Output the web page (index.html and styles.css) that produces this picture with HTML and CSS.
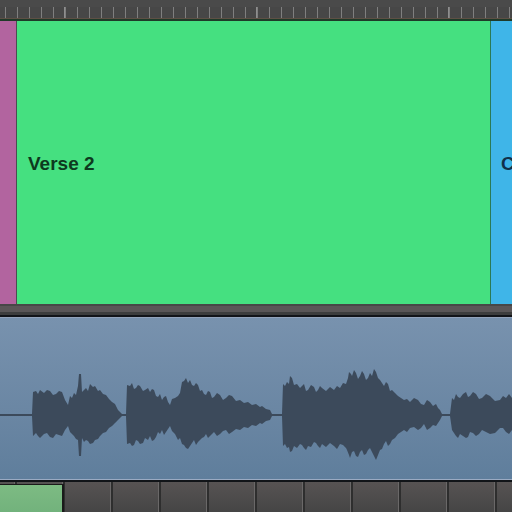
FILE: index.html
```html
<!DOCTYPE html>
<html lang="en">
<head>
  <meta charset="UTF-8">
  <meta name="viewport" content="width=device-width, initial-scale=1.0">
  <title>Arrangement</title>
  <link rel="stylesheet" href="styles.css">
</head>

<body>
  <div class="editor">
    <div class="ruler"></div>

    <div class="arrange-lane">
      <div class="section section-pink"></div>
      <div class="section section-green">
        <span class="section-name">Verse 2</span>
      </div>
      <div class="section section-blue">
        <span class="section-name">C</span>
      </div>
    </div>

    <div class="lane-divider"></div>

    <div class="audio-region">
      <svg class="waveform" width="512" height="162" viewBox="0 318 512 162">
        <path d="M0,414 L32,414 L33,392 L36,391 L38,394 L40,390 L44,393 L47,390 L50,391 L53,395 L56,394 L59,391 L62,392 L65,400 L68,405 L70,396 L72,398 L74,393 L76,395 L78,386 L79,374 L81,374 L82,392 L84,390 L86,388 L88,391 L90,384 L93,387 L95,386 L98,391 L100,390 L103,394 L106,395 L109,399 L112,402 L115,404 L118,410 L122,414 L126,414 L127,385 L130,386 L132,383 L134,389 L136,388 L138,385 L140,386 L143,391 L145,390 L148,388 L150,392 L152,389 L154,390 L156,396 L158,397 L160,394 L162,400 L164,397 L166,396 L168,402 L170,405 L172,399 L175,398 L178,396 L180,393 L182,382 L184,381 L186,378 L188,383 L190,380 L192,385 L194,386 L196,383 L198,385 L200,391 L202,390 L204,394 L206,395 L208,391 L210,392 L212,398 L214,397 L217,393 L220,395 L223,400 L226,398 L229,395 L232,396 L236,401 L240,400 L244,403 L248,402 L252,405 L256,404 L260,407 L262,406 L266,409 L270,410 L272,414 L282,414 L283,384 L285,386 L287,382 L289,384 L290,376 L292,378 L294,385 L297,384 L300,388 L302,386 L304,384 L306,391 L308,390 L311,385 L314,387 L316,392 L318,390 L320,386 L322,388 L326,391 L330,387 L334,390 L337,386 L340,388 L343,383 L346,384 L348,378 L349,372 L351,374 L352,376 L354,370 L356,373 L358,379 L360,376 L362,371 L364,374 L366,380 L368,378 L370,373 L372,376 L374,369 L376,372 L378,378 L380,380 L382,383 L384,386 L386,382 L388,384 L390,391 L392,390 L395,393 L398,396 L401,398 L404,400 L407,399 L410,402 L414,398 L418,400 L421,404 L424,405 L427,400 L430,402 L433,406 L436,404 L438,408 L440,410 L442,414 L450,414 L452,398 L454,400 L456,394 L458,397 L460,398 L463,394 L466,392 L468,397 L470,396 L473,392 L476,394 L479,399 L482,398 L486,394 L490,396 L495,401 L500,400 L503,396 L506,398 L509,394 L512,398 L512,430 L509,434 L506,432 L503,428 L500,428 L495,433 L490,434 L486,432 L482,430 L479,434 L476,436 L473,433 L470,432 L468,437 L466,438 L463,436 L460,434 L458,438 L456,436 L454,433 L452,430 L450,416 L442,416 L440,420 L438,423 L436,426 L433,425 L430,428 L427,430 L424,424 L421,428 L418,430 L414,427 L410,428 L407,432 L404,430 L401,432 L398,434 L395,438 L392,440 L390,444 L388,446 L386,441 L384,444 L382,449 L380,450 L378,455 L376,460 L374,456 L372,452 L370,448 L368,450 L366,454 L364,455 L362,450 L360,452 L358,457 L356,456 L354,451 L352,452 L350,458 L349,455 L347,450 L346,448 L343,445 L340,444 L337,449 L334,446 L330,443 L326,447 L322,444 L320,448 L318,446 L316,443 L314,442 L311,447 L308,446 L306,450 L304,448 L302,445 L300,444 L297,448 L294,446 L292,451 L290,452 L289,447 L287,448 L285,444 L283,446 L282,416 L272,416 L270,420 L266,421 L262,424 L260,423 L256,426 L252,425 L248,428 L244,427 L240,430 L236,429 L232,432 L229,434 L226,430 L223,431 L220,434 L217,436 L214,432 L212,434 L210,436 L208,438 L206,434 L204,437 L202,438 L200,440 L198,442 L196,445 L194,440 L192,443 L190,446 L188,449 L186,448 L184,445 L182,444 L180,438 L178,440 L175,434 L172,431 L170,426 L168,429 L166,432 L164,435 L162,430 L160,434 L158,432 L156,437 L154,440 L152,441 L150,436 L148,440 L145,438 L143,443 L140,444 L138,441 L136,440 L134,445 L132,446 L130,443 L127,444 L126,416 L122,416 L118,420 L115,423 L112,426 L109,428 L106,432 L103,433 L100,436 L98,439 L95,440 L93,443 L90,444 L88,441 L86,440 L84,442 L82,438 L81,456 L79,456 L78,440 L76,439 L74,436 L72,434 L70,432 L68,426 L65,430 L62,436 L59,435 L56,434 L53,438 L50,437 L47,433 L44,434 L40,438 L38,436 L36,433 L33,436 L32,416 L0,416 Z" fill="#3c4a5b"/>
      </svg>
    </div>

    <div class="lower-lane">
      <div class="clip-green"></div>
    </div>
  </div>
</body>
</html>
```

FILE: styles.css
```css
* {
  margin: 0;
  padding: 0;
  box-sizing: border-box;
}

body {
  width: 512px;
  height: 512px;
  overflow: hidden;
  background: #4a4a4a;
  font-family: 'Liberation Sans', Arial, sans-serif;
}

.editor {
  display: flex;
  flex-direction: column;
  height: 512px;
}

/* bar ruler along the top */
.ruler {
  height: 19px;
  flex: none;
  border-bottom: 1px solid #5e5044;
  background:
    linear-gradient(#4a4a4a, #4a4a4a) 0 0 / 100% 7px no-repeat,
    linear-gradient(90deg, transparent 0 64px, #8e8e8e 64px 65px, transparent 65px) 0 0 / 192px 100% repeat-x,
    repeating-linear-gradient(90deg, transparent 0 5px, #7f7f7f 5px 6px, transparent 6px 12px),
    #474747;
}

.arrange-lane {
  height: 285px;
  flex: none;
  display: flex;
  border-top: 2px solid #1f3a29;
}

.section {
  height: 100%;
}

.section-pink {
  width: 17px;
  background: #b2649f;
  border-right: 1px solid #4e4a52;
}

.section-green {
  flex: 1;
  background: #45e080;
  padding: 133px 0 0 11px;
}

.section-blue {
  width: 22px;
  background: #3fb5e8;
  border-left: 1px solid #2b7a55;
  padding: 133px 0 0 10px;
  overflow: hidden;
}

.section-name {
  display: block;
  font-size: 19px;
  line-height: 19px;
  font-weight: bold;
  color: #0d3a1e;
  white-space: nowrap;
}

.section-blue .section-name {
  color: #10304a;
}

.lane-divider {
  height: 14px;
  flex: none;
  background: linear-gradient(#474747 0 2px, #5a5657 2px 8px, #3d3d3d 8px 11px, #121418 11px 13px, #93a3bb 13px);
}

.audio-region {
  height: 162px;
  flex: none;
  background: linear-gradient(#7892ae, #6a86a3 60%, #5f7e9c);
  border-bottom: 1px solid #9aaac2;
}

.waveform {
  display: block;
}

.lower-lane {
  flex: 1;
  border-top: 2px solid #111418;
  background:
    linear-gradient(90deg, transparent 0 14px, #6a6868 14px 15px, #2e2e2e 15px 17px, transparent 17px) 0 0 / 48px 100% repeat-x,
    linear-gradient(#575353, #454545);
  padding-top: 2px;
}

.clip-green {
  width: 64px;
  height: 100%;
  background: linear-gradient(#7dbb83, #72b27c);
  border-top: 1px solid #1a1a1a;
  border-right: 2px solid #1a1a1a;
}
```
